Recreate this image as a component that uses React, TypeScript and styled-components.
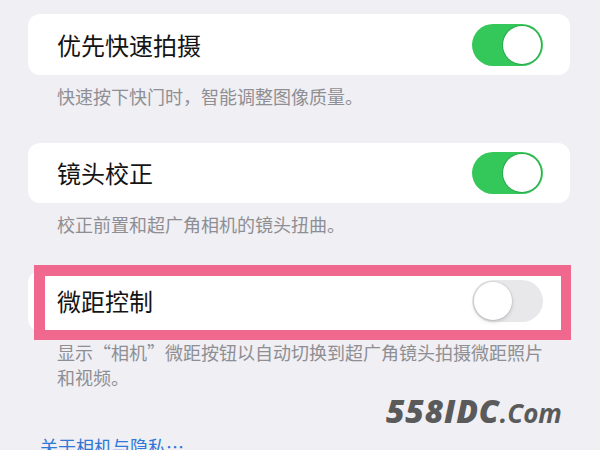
import React from "react";
import styled, { createGlobalStyle } from "styled-components";

const Global = createGlobalStyle`
  html, body { margin: 0; padding: 0; background: #efeff4; }
  body { width: 600px; height: 450px; overflow: hidden; }
  #root { width: 600px; height: 450px; }
`;

const Page = styled.div`
  position: relative;
  width: 600px;
  height: 450px;
  overflow: hidden;
  box-sizing: border-box;
  padding: 14px 30px 0 28px;
  background: #efeff4;
  font-family: "Noto Sans CJK SC", "Noto Sans", sans-serif;
`;

const Section = styled.section`
  position: relative;
  display: flex;
  flex-direction: column;
  padding-bottom: 34px;
`;

const Card = styled.div<{ $h: number }>`
  position: relative;
  display: flex;
  align-items: center;
  justify-content: space-between;
  height: ${(p) => p.$h}px;
  padding: 0 27px 0 29px;
  background: #ffffff;
  border-radius: 12px;
`;

const Label = styled.span`
  font-size: 24px;
  color: #141414;
  line-height: 1;
`;

const Footer = styled.p`
  margin: 0;
  padding: 9px 20px 0 29px;
  font-size: 18px;
  line-height: 25px;
  color: #8e8e93;
`;

const FooterLine = styled.span`
  display: block;
  white-space: nowrap;
`;

const Track = styled.span<{ $on: boolean }>`
  position: relative;
  display: flex;
  align-items: center;
  justify-content: ${(p) => (p.$on ? "flex-end" : "flex-start")};
  box-sizing: border-box;
  width: 71px;
  height: 42px;
  padding: 2px;
  border-radius: 21px;
  background: ${(p) => (p.$on ? "#34c759" : "#e8e8ea")};
`;

const Knob = styled.span<{ $on: boolean }>`
  display: block;
  width: 38px;
  height: 38px;
  border-radius: 50%;
  background: #ffffff;
  box-shadow: ${(p) =>
    p.$on
      ? "0 0 0 1px rgba(40,150,70,0.6)"
      : "0 2px 4px rgba(0,0,0,0.15), 0 0 0 1px rgba(0,0,0,0.06)"};
`;

const Highlight = styled.span`
  position: absolute;
  left: 6px;
  top: -6px;
  right: -1px;
  bottom: -9px;
  border: 11px solid #f0688e;
  border-right-width: 10px;
  border-bottom-width: 10px;
  pointer-events: none;
`;

const Link = styled.a`
  display: block;
  margin: 10px 0 0 12px;
  font-size: 18px;
  line-height: 25px;
  color: #2f78d4;
  text-decoration: none;
`;

const Watermark = styled.div`
  position: absolute;
  left: 386px;
  top: 395px;
  display: flex;
  align-items: baseline;
  font-family: "Open Sans", "DejaVu Sans", sans-serif;
  font-style: italic;
  font-weight: 800;
  color: #5a5a5a;
  line-height: 1;
`;

const Big = styled.span`
  font-size: 32px;
  letter-spacing: 0.8px;
`;

const Small = styled.span`
  font-size: 26px;
  font-weight: 700;
`;

function Toggle({ on }: { on: boolean }) {
  return (
    <Track $on={on}>
      <Knob $on={on} />
    </Track>
  );
}

type Item = { label: string; desc: string[]; on: boolean; h: number; mark?: boolean };

const items: Item[] = [
  { label: "优先快速拍摄", desc: ["快速按下快门时，智能调整图像质量。"], on: true, h: 61 },
  { label: "镜头校正", desc: ["校正前置和超广角相机的镜头扭曲。"], on: true, h: 60 },
  {
    label: "微距控制",
    desc: ["显示“相机”微距按钮以自动切换到超广角镜头拍摄微距照片", "和视频。"],
    on: false,
    h: 60,
    mark: true,
  },
];

export default function App() {
  return (
    <>
      <Global />
      <Page>
        {items.map((it) => (
          <Section key={it.label}>
            <Card $h={it.h}>
              <Label>{it.label}</Label>
              <Toggle on={it.on} />
              {it.mark && <Highlight />}
            </Card>
            <Footer>
              {it.desc.map((line, i) => (
                <FooterLine key={i}>{line}</FooterLine>
              ))}
            </Footer>
          </Section>
        ))}
        <Link href="#">关于相机与隐私…</Link>
        <Watermark>
          <Big>558IDC</Big>
          <Small>.Com</Small>
        </Watermark>
      </Page>
    </>
  );
}
